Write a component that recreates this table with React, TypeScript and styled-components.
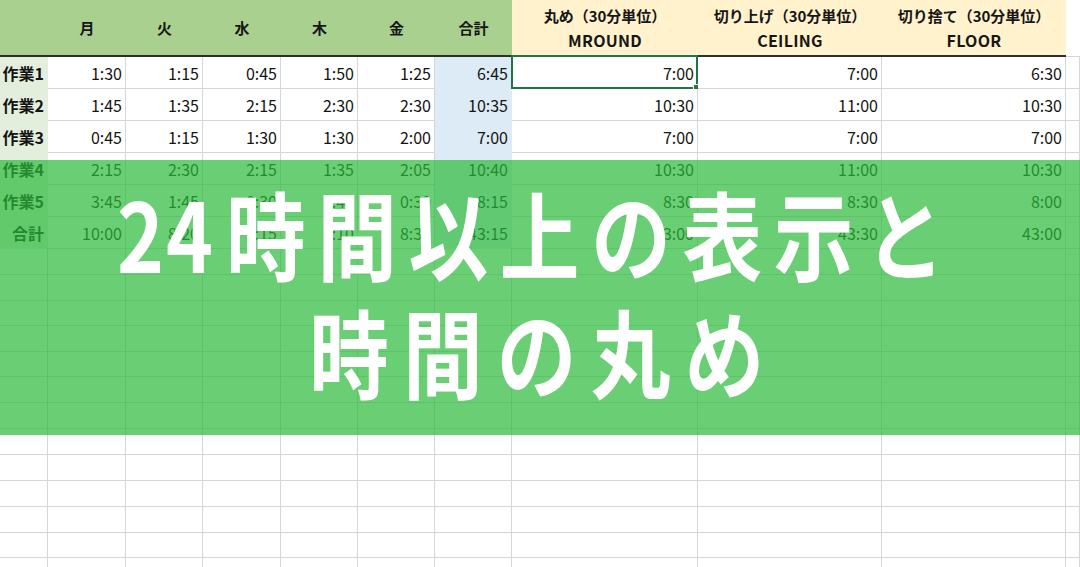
import React from "react";
import styled, { createGlobalStyle } from "styled-components";

const GlobalStyle = createGlobalStyle`
  html, body { margin: 0; padding: 0; background: #ffffff; }
  body {
    width: 1080px;
    height: 567px;
    overflow: hidden;
    font-family: "Noto Sans CJK JP", "Noto Sans", sans-serif;
  }
`;

const GRID = "#d6d6d6";
const LABEL_BG = "#e4eedc";
const TOTAL_BG = "#ddebf7";

const Page = styled.div`
  position: relative;
  width: 1080px;
  height: 567px;
  overflow: hidden;
  background: #ffffff;
`;

const Sheet = styled.div`
  display: grid;
  grid-template-columns: 48px 78px 77px 78px 77px 77px 77px 186px 184px 184px 1fr;
`;

type Tone = "green" | "yellow" | "none";

const HeaderCell = styled.div<{ $tone: Tone }>`
  height: 57px;
  box-sizing: border-box;
  display: flex;
  flex-direction: column;
  align-items: center;
  justify-content: center;
  font-weight: 700;
  font-size: 15px;
  line-height: 25px;
  color: #161616;
  white-space: nowrap;
  background: ${(p) =>
    p.$tone === "green" ? "#a9d08e" : p.$tone === "yellow" ? "#fff2cc" : "#ffffff"};
  border-bottom: ${(p) => (p.$tone === "none" ? `1px solid ${GRID}` : "2px solid #2e2e2e")};
`;

const HeaderLine = styled.span<{ $latin?: boolean }>`
  font-size: ${(p) => (p.$latin ? "16px" : "15px")};
  letter-spacing: ${(p) => (p.$latin ? "0.3px" : "0")};
`;

type Fill = "label" | "total" | "none";

const Cell = styled.div<{ $fill: Fill; $bold?: boolean; $h: number }>`
  position: relative;
  height: ${(p) => p.$h}px;
  box-sizing: border-box;
  display: flex;
  align-items: center;
  justify-content: flex-end;
  padding-right: 3px;
  font-size: 16px;
  font-weight: ${(p) => (p.$bold ? 700 : 400)};
  color: #141414;
  white-space: nowrap;
  background: ${(p) => (p.$fill === "label" ? LABEL_BG : p.$fill === "total" ? TOTAL_BG : "#ffffff")};
  border-right: 1px solid
    ${(p) => (p.$fill === "label" ? LABEL_BG : p.$fill === "total" ? TOTAL_BG : GRID)};
  border-bottom: 1px solid
    ${(p) => (p.$fill === "label" ? LABEL_BG : p.$fill === "total" ? TOTAL_BG : GRID)};
`;

const SelectionFrame = styled.span`
  position: absolute;
  top: -2px;
  left: -1px;
  right: -1px;
  bottom: -1px;
  border: 2px solid #217346;
  pointer-events: none;
`;

const FillHandle = styled.span`
  position: absolute;
  right: -4px;
  bottom: -4px;
  width: 5px;
  height: 5px;
  background: #217346;
  border: 1px solid #ffffff;
`;

const Banner = styled.div`
  position: absolute;
  top: 160px;
  left: 0;
  width: 100%;
  height: 275px;
  background: rgba(43, 186, 57, 0.7);
  display: flex;
  align-items: center;
  justify-content: center;
`;

const Title = styled.h1`
  margin: 0;
  width: 100%;
  color: #ffffff;
  font-family: "Noto Sans CJK JP", "Noto Sans", sans-serif;
  font-weight: 700;
  font-size: 96px;
  line-height: 118px;
  text-align: center;
  transform: translateY(-7px) scaleX(0.83);
`;

const TitleLine = styled.span<{ $spacing: number; $padL: number; $padR: number }>`
  display: block;
  white-space: nowrap;
  letter-spacing: ${(p) => p.$spacing}px;
  padding-left: ${(p) => p.$padL}px;
  padding-right: ${(p) => p.$padR}px;
`;

const Digits = styled.span`
  letter-spacing: 2.5px;
  margin-right: 13px;
`;

const headers: { tone: Tone; lines: string[] }[] = [
  { tone: "green", lines: [""] },
  { tone: "green", lines: ["月"] },
  { tone: "green", lines: ["火"] },
  { tone: "green", lines: ["水"] },
  { tone: "green", lines: ["木"] },
  { tone: "green", lines: ["金"] },
  { tone: "green", lines: ["合計"] },
  { tone: "yellow", lines: ["丸め（30分単位）", "MROUND"] },
  { tone: "yellow", lines: ["切り上げ（30分単位）", "CEILING"] },
  { tone: "yellow", lines: ["切り捨て（30分単位）", "FLOOR"] },
  { tone: "none", lines: [""] },
];

const rows: string[][] = [
  ["作業1", "1:30", "1:15", "0:45", "1:50", "1:25", "6:45", "7:00", "7:00", "6:30"],
  ["作業2", "1:45", "1:35", "2:15", "2:30", "2:30", "10:35", "10:30", "11:00", "10:30"],
  ["作業3", "0:45", "1:15", "1:30", "1:30", "2:00", "7:00", "7:00", "7:00", "7:00"],
  ["作業4", "2:15", "2:30", "2:15", "1:35", "2:05", "10:40", "10:30", "11:00", "10:30"],
  ["作業5", "3:45", "1:45", "0:30", "1:45", "0:30", "8:15", "8:30", "8:30", "8:00"],
  ["合計", "10:00", "8:20", "7:15", "9:10", "8:30", "43:15", "43:00", "43:30", "43:00"],
];

const emptyHeights = [26, 26, 25, 26, 25, 26, 26, 26, 26, 26, 26, 25, 26];

export default function App() {
  return (
    <Page>
      <GlobalStyle />
      <Sheet>
        {headers.map((h, i) => (
          <HeaderCell key={`h${i}`} $tone={h.tone}>
            {h.lines.map((l, j) => (
              <HeaderLine key={j} $latin={j === 1}>
                {l}
              </HeaderLine>
            ))}
          </HeaderCell>
        ))}
        {rows.map((r, ri) =>
          [...r, ""].map((v, ci) => {
            const fill: Fill = ci === 0 ? "label" : ci === 6 ? "total" : "none";
            const selected = ri === 0 && ci === 7;
            return (
              <Cell key={`r${ri}c${ci}`} $fill={fill} $bold={ci === 0} $h={32}>
                {v}
                {selected && (
                  <SelectionFrame>
                    <FillHandle />
                  </SelectionFrame>
                )}
              </Cell>
            );
          })
        )}
        {emptyHeights.map((hgt, ri) =>
          Array.from({ length: 11 }).map((_, ci) => (
            <Cell key={`e${ri}c${ci}`} $fill="none" $h={hgt} />
          ))
        )}
      </Sheet>
      <Banner>
        <Title>
          <TitleLine $spacing={14} $padL={0} $padR={8}>
            <Digits>24</Digits>時間以上の表示と
          </TitleLine>
          <TitleLine $spacing={17} $padL={9} $padR={0}>
            時間の丸め
          </TitleLine>
        </Title>
      </Banner>
    </Page>
  );
}
